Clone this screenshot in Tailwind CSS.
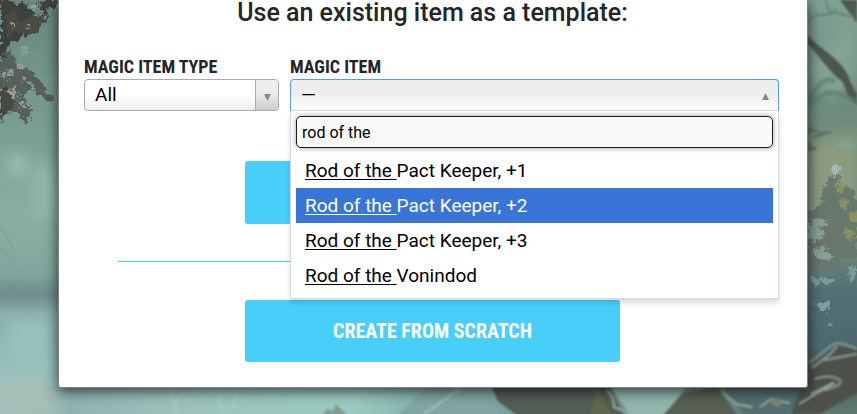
<!DOCTYPE html>
<html lang="en">
<head>
<meta charset="utf-8">
<meta name="viewport" content="width=device-width, initial-scale=1">
<title>Create a Magic Item</title>
<script src="https://cdn.jsdelivr.net/npm/@tailwindcss/browser@4"></script>
</head>
<body class="relative isolate min-h-screen overflow-x-hidden bg-[#82a79c] pr-[49px] pb-[26px] pl-[58px] font-[Roboto,sans-serif] text-[#242528]">

<!-- Painted forest backdrop -->
<svg class="absolute inset-0 -z-10 h-full w-full" viewBox="0 0 857 414" preserveAspectRatio="xMidYMid slice" aria-hidden="true">
  <defs>
    <linearGradient id="mist" x1="0" y1="0" x2="0" y2="1">
      <stop offset="0" stop-color="#68877f"/><stop offset=".3" stop-color="#789d91"/><stop offset=".52" stop-color="#8bb0a2"/><stop offset=".67" stop-color="#80a59d"/><stop offset=".71" stop-color="#708f8e"/><stop offset=".76" stop-color="#8bb1ac"/><stop offset=".92" stop-color="#99c2bf"/><stop offset="1" stop-color="#9bb8b2"/>
    </linearGradient>
    <linearGradient id="glade" x1="0" y1="0" x2="0" y2="1">
      <stop offset="0" stop-color="#7fa294"/><stop offset=".25" stop-color="#6c8c7d"/><stop offset=".42" stop-color="#7d9079"/><stop offset=".6" stop-color="#718777"/><stop offset=".7" stop-color="#537075"/><stop offset=".84" stop-color="#4c6a6e"/><stop offset=".88" stop-color="#515b54"/><stop offset="1" stop-color="#5d7972"/>
    </linearGradient>
    <linearGradient id="water" x1="0" y1="0" x2="1" y2="0">
      <stop offset="0" stop-color="#a5c3bd"/><stop offset=".09" stop-color="#8fb3b2"/><stop offset=".22" stop-color="#9cc1ba"/><stop offset=".45" stop-color="#9acbc0"/><stop offset=".57" stop-color="#7fa9a3"/><stop offset="1" stop-color="#5f7f78"/>
    </linearGradient>
    <filter id="soft" x="-40%" y="-40%" width="180%" height="180%"><feGaussianBlur stdDeviation="7"/></filter>
    <filter id="brush" x="-5%" y="-5%" width="110%" height="110%"><feGaussianBlur stdDeviation=".9"/></filter>
    <filter id="ragged" x="-10%" y="-10%" width="120%" height="120%"><feTurbulence type="fractalNoise" baseFrequency=".2" numOctaves="3" seed="4"/><feDisplacementMap in="SourceGraphic" scale="12" xChannelSelector="R" yChannelSelector="G"/><feGaussianBlur stdDeviation=".4"/></filter>
  </defs>
  <rect width="430" height="414" fill="url(#mist)"/>
  <rect x="427" width="430" height="414" fill="url(#glade)"/>
  <rect y="386" width="780" height="28" fill="url(#water)"/>
  <g filter="url(#soft)">
    <circle cx="17" cy="165" r="12" fill="#98bdac"/>
    <ellipse cx="45" cy="190" rx="12" ry="28" fill="#92b8a8"/>
    <path d="M0 284L60 288V294L0 300Z" fill="#6f9190"/>
    <path d="M10 320H50V382L10 378Z" fill="#97c1bd"/>
    <path d="M0 385L40 375L58 414H0Z" fill="#a7beb7"/>
    <path d="M805 70L857 5V75L830 100Z" fill="#82a393"/>
    <path d="M810 145L857 132V215L806 230Z" fill="#8b9b80"/>
  </g>
  <g filter="url(#ragged)">
    <path d="M0 0L26 4L34 13L31 26L24 38L10 43L7 58L0 65Z" fill="#3c403d"/>
    <path d="M5 13L15 9L17 22L31 17L45 14L43 27L30 35L18 31L7 38Z" fill="#4b4b43"/>
    <path d="M38 0H58V9L48 7L47 18L42 11Z" fill="#443f3c"/>
    <path d="M0 57L11 52L18 66L32 72L43 85L54 102L43 99L34 90L24 94L31 113L24 124L19 111L7 114L0 122Z" fill="#57605a"/>
    <path d="M0 86L9 91L14 104L7 115L0 118Z" fill="#454843"/>
    <path d="M12 20L16 24L13 28ZM22 46L27 50L22 57ZM8 68L14 74L9 80ZM29 80L37 89L30 89ZM20 98L25 104L20 108ZM26 22L31 25L27 29ZM13 86L18 91L14 95ZM31 4L38 7L33 11Z" fill="#87a298"/>
    <path d="M17 60L22 64L19 71ZM8 90L16 87L19 94L12 99ZM2 70L6 75L2 79ZM22 75L27 79L24 83Z" fill="#9a9990"/>
  </g>
  <path d="M18 50C29 48 33 54 38 58M34 66C43 78 50 84 57 92M43 78L57 81" fill="none" stroke="#78988f" stroke-width="1.5"/>
  <path d="M0 248L16 267L39 279M0 226C4 235 12 243 15 252" fill="none" stroke="#789e95" stroke-width="2" opacity=".4"/>

  <!-- right bank -->
  <g filter="url(#brush)">
    <path d="M840 0H857V23Z" fill="#4d5a51"/>
    <path d="M807 35C821 49 837 58 845 70C850 78 852 89 857 93V105L847 94L843 82C830 73 823 60 807 43Z" fill="#4d554f"/>
    <path d="M807 102C819 83 826 75 835 82M808 107C825 88 834 90 857 101" fill="none" stroke="#58796f" stroke-width="5" opacity=".6"/>
    <path d="M807 22C819 9 829 20 836 9M825 0L830 12L854 17" fill="none" stroke="#678373" stroke-width="2"/>
    <path d="M807 127L820 131L807 134ZM813 137Q821 128 832 132Q823 137 813 138ZM807 142L818 149L807 152Z" fill="#5d7569"/>
    <path d="M834 145Q842 140 857 144L849 150Z" fill="#81a196"/>
  </g>
  <g filter="url(#ragged)">
    <path d="M807 211L821 206L823 189L831 175L838 171L845 190L853 188L857 201V260L844 257L831 271L819 264L807 270Z" fill="#68786d"/>
    <path d="M837 178L845 185L842 193L835 188ZM841 197L849 202L847 211L840 207ZM849 213L857 211V222L850 222ZM845 228L855 232L853 241L846 238Z" fill="#8b9060"/>
    <path d="M813 217L824 219L829 229L820 225L825 237L817 241L807 237V230ZM814 248L827 249L835 254L829 261L813 256Z" fill="#869f96"/>
    <path d="M833 164L841 168L837 178L832 173Z" fill="#a2b8b4"/>
    <path d="M809 277L837 278L830 284L812 284ZM849 268L857 265V278L850 281Z" fill="#759d9c"/>
    <path d="M814 304L826 301L832 306L826 313L819 308ZM828 321L833 324L830 330Z" fill="#7e9ea2"/>
  </g>
  <g filter="url(#brush)">
    <path d="M807 370L835 346L867 350V388L820 414H790V388H807Z" fill="#4e514a"/>
    <path d="M809 363Q826 350 832 345T857 349M812 368L830 354L837 346M824 360L857 354M815 379Q829 374 838 379T824 390M811 394L834 383" fill="none" stroke="#849b94" stroke-width="2"/>
  </g>

  <!-- lower shoreline -->
  <g filter="url(#brush)">
    <path d="M395 418L430 385H490L500 418Z" fill="#80a5a2"/>
    <path d="M489 382H608L617 402L626 418H520L498 401Z" fill="#525c55"/>
    <path d="M596 386L613 418H590Z" fill="#5f684f"/>
    <path d="M608 382H690L662 418H632Z" fill="#91b6ad"/>
    <path d="M664 414L683 393L717 387L740 418H660Z" fill="#586052"/>
    <path d="M719 382H803L790 418H746Z" fill="#536e70"/>
    <path d="M607 390Q614 397 614 407L631 414M723 393L736 404L752 407M760 407L771 399L790 403M799 404L834 383" fill="none" stroke="#94aaa0" stroke-width="2"/>
    <path d="M770 403L777 397L783 403L778 407Z" fill="#79876a"/>
    <path d="M322 416L327 409L333 411L336 404L343 411L348 416Z" fill="#7f9c8d"/>
    <path d="M172 388Q170 401 178 413M175 404L181 394M221 388Q215 400 226 414M239 389L233 408M424 414L460 389" fill="none" stroke="#acd0c7" stroke-width="3" opacity=".5"/>
  </g>
</svg>

<main class="rounded-b-[3px] border border-t-0 border-[#7d8285] bg-white pr-[26px] pb-[25px] pl-[25px] shadow-[0_3px_14px_rgba(0,0,0,0.7)]">
  <h1 class="pb-7 text-center text-[25px] leading-[26px] font-medium">Use an existing item as a template:</h1>

  <form class="flex flex-col" onsubmit="return false">
    <div class="flex gap-[11px]">
      <div class="w-[195px] shrink-0">
        <label for="item-type" class="block h-[25px] font-['Roboto_Condensed',Roboto,sans-serif] text-lg leading-[26px] font-bold whitespace-nowrap uppercase">Magic Item Type</label>
        <div class="relative">
          <select id="item-type" class="block h-8 w-full appearance-none rounded-[4px] border border-[#aaa] bg-linear-to-b from-white from-50% to-[#eee] pr-7 pl-[10px] text-[19px] leading-[30px] text-black">
            <option>All</option>
          </select>
          <span class="pointer-events-none absolute inset-y-px right-px flex w-[23px] items-center justify-center rounded-r-[3px] border-l border-[#aaa] bg-linear-to-t from-[#ccc] to-[#eee] to-60%">
            <svg class="mt-1 h-[7px] w-[7px]" viewBox="0 0 7 7" aria-hidden="true"><path d="M0 0H7L3.5 7Z" fill="#888"/></svg>
          </span>
        </div>
      </div>

      <div class="min-w-0 flex-1 pr-[2px]">
        <label for="magic-item" class="block h-[25px] font-['Roboto_Condensed',Roboto,sans-serif] text-lg leading-[26px] font-bold uppercase">Magic Item</label>
        <div class="relative">
          <button id="magic-item" type="button" aria-haspopup="listbox" aria-expanded="true" class="flex h-8 w-full items-center justify-between rounded-t-[4px] border border-[#5897fb] border-b-[#d5dae5] bg-linear-to-b from-[#eee] from-50% to-white pr-[9px] pl-[10px] text-[19px] leading-[30px] text-black">
            <span>—</span>
            <svg class="mt-0.5 h-[7px] w-[7px]" viewBox="0 0 7 7" aria-hidden="true"><path d="M0 7H7L3.5 0Z" fill="#888"/></svg>
          </button>
          <div class="absolute inset-x-0 top-8 z-10 border border-t-0 border-[#d5dae5] bg-white p-[5px] shadow-[0_4px_5px_rgba(0,0,0,0.15)]">
            <input type="text" aria-label="Search magic items" value="rod of the" class="block h-8 w-full rounded-[5px] border border-[#1b1b1b] bg-[#f9f9f9] px-[5px] text-base text-black shadow-[0_0_5px_rgba(0,0,0,0.4)] outline-none">
            <ul role="listbox" aria-label="Magic items" class="mt-[5px] text-[19px] leading-[35px] text-black">
              <li role="option" class="px-[9px]"><span class="whitespace-pre underline underline-offset-2">Rod of the </span>Pact Keeper, +1</li>
              <li role="option" aria-selected="true" class="bg-[#3875d7] px-[9px] text-white"><span class="whitespace-pre underline underline-offset-2">Rod of the </span>Pact Keeper, +2</li>
              <li role="option" class="px-[9px]"><span class="whitespace-pre underline underline-offset-2">Rod of the </span>Pact Keeper, +3</li>
              <li role="option" class="px-[9px]"><span class="whitespace-pre underline underline-offset-2">Rod of the </span>Vonindod</li>
            </ul>
          </div>
        </div>
      </div>
    </div>

    <button type="submit" aria-label="Create from template" class="mt-[50px] h-[63px] w-[375px] self-center rounded-[3px] bg-[#47cffa]"></button>
    <hr class="mx-[34px] mt-[37px] mb-[38px] border-[#47cffa]">
    <button type="button" class="h-[62px] w-[375px] self-center rounded-[3px] bg-[#47cffa] font-['Roboto_Condensed',Roboto,sans-serif] text-[20px] font-bold text-white uppercase">Create from Scratch</button>
  </form>
</main>
</body>
</html>
